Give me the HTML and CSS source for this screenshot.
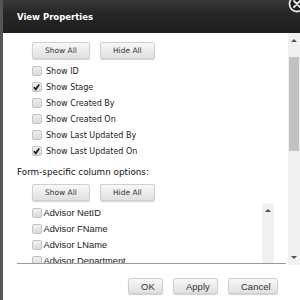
FILE: index.html
```html
<!DOCTYPE html>
<html lang="en">
<head>
    <meta charset="UTF-8">
    <meta name="viewport" content="width=device-width, initial-scale=1.0">
    <title>View Properties</title>
    <link rel="stylesheet" href="styles.css">
</head>
<body>
    <div class="dialog">
        <div class="titlebar">
            <span class="title">View Properties</span>
            <svg class="close" width="20" height="20" viewBox="0 0 20 20">
                <circle cx="10" cy="10" r="7.5" fill="#1c1c1c" stroke="#e8e8e8" stroke-width="1.8"/>
                <path d="M7 7 L13 13 M13 7 L7 13" stroke="#f0f0f0" stroke-width="1.8" stroke-linecap="round"/>
            </svg>
        </div>

        <div class="main">
            <div class="content">
                <div class="btn-row">
                    <button class="btn">Show All</button>
                    <button class="btn">Hide All</button>
                </div>

                <ul class="checks">
                    <li><span class="box"></span>Show ID</li>
                    <li><span class="box checked"><svg viewBox="0 0 10 10"><path d="M2.2 5.2 L4.2 7.6 L8 2.2" fill="none" stroke="#1a1a1a" stroke-width="1.8"/></svg></span>Show Stage</li>
                    <li><span class="box"></span>Show Created By</li>
                    <li><span class="box"></span>Show Created On</li>
                    <li><span class="box"></span>Show Last Updated By</li>
                    <li><span class="box checked"><svg viewBox="0 0 10 10"><path d="M2.2 5.2 L4.2 7.6 L8 2.2" fill="none" stroke="#1a1a1a" stroke-width="1.8"/></svg></span>Show Last Updated On</li>
                </ul>

                <div class="heading">Form-specific column options:</div>

                <div class="btn-row second">
                    <button class="btn">Show All</button>
                    <button class="btn">Hide All</button>
                </div>

                <div class="inner">
                    <ul class="fields">
                        <li><span class="box"></span>Advisor NetID</li>
                        <li><span class="box"></span>Advisor FName</li>
                        <li><span class="box"></span>Advisor LName</li>
                        <li><span class="box"></span>Advisor Department</li>
                    </ul>
                    <div class="inner-bar">
                        <span class="arrow up"></span>
                    </div>
                </div>
            </div>

            <div class="scrollbar">
                <span class="arrow up"></span>
                <div class="track"><div class="thumb"></div></div>
                <span class="arrow down"></span>
            </div>
        </div>

        <div class="footer">
            <button class="btn ok">OK</button>
            <button class="btn apply">Apply</button>
            <button class="btn cancel">Cancel</button>
        </div>
    </div>
</body>
</html>
```

FILE: styles.css
```css
body {
    margin: 0;
    background: #fff;
    font-family: 'DejaVu Sans', sans-serif;
    color: #1a1a1a;
}

.dialog {
    width: 300px;
    height: 300px;
    border-left: 3px solid #555;
    box-sizing: border-box;
    overflow: hidden;
    position: relative;
    background: #fff;
}

.titlebar {
    height: 33px;
    display: flex;
    align-items: center;
    padding-left: 14px;
    background: linear-gradient(#393939, #262626 40%, #1f1f1f);
}

.title {
    color: #fff;
    font-weight: bold;
    font-size: 8.5px;
}

.close {
    position: absolute;
    top: -6px;
    right: -7px;
}

.main {
    height: 232px;
    display: flex;
}

.content {
    flex: 1;
    overflow: hidden;
    padding: 9px 2px 0 14px;
}

.btn-row {
    display: flex;
    gap: 10px;
    padding-left: 15px;
}

.btn-row.second {
    margin-top: 4px;
}

.btn {
    height: 17px;
    padding: 0 12px;
    border: 1px solid #cfcfcf;
    border-radius: 2px;
    background: linear-gradient(#f8f8f8, #e0e0e0);
    box-shadow: 0 1px 1px rgba(0, 0, 0, 0.18);
    font-family: 'DejaVu Sans', sans-serif;
    font-size: 7.5px;
    color: #333;
}

.checks, .fields {
    list-style: none;
    margin: 0;
    padding: 0;
}

.checks {
    margin-top: 4px;
    padding-left: 15px;
}

.checks li, .fields li {
    height: 16px;
    display: flex;
    align-items: center;
    font-size: 8px;
}

.box {
    width: 10px;
    height: 10px;
    box-sizing: border-box;
    border: 1px solid #c2c2c2;
    border-radius: 2px;
    background: linear-gradient(#f1f1f1, #dadada);
    margin-right: 4px;
    display: flex;
}

.box svg {
    width: 10px;
    height: 10px;
    margin: -1px 0 0 -1px;
}

.heading {
    margin-top: 5px;
    height: 16px;
    line-height: 16px;
    font-size: 8.8px;
    color: #111;
}

.inner {
    margin-top: 2px;
    height: 61px;
    box-sizing: border-box;
    border-bottom: 1px solid #9a9a9a;
    display: flex;
    padding-right: 12px;
}

.fields {
    flex: 1;
    padding: 2px 0 0 15px;
    overflow: hidden;
}

.fields li {
    font-family: 'Liberation Sans', Arial, sans-serif;
    font-size: 9.3px;
}

.fields .box {
    margin-right: 1.5px;
}

.inner-bar {
    width: 12px;
    background: #f1f1f1;
    display: flex;
    flex-direction: column;
    align-items: center;
    padding-top: 6px;
    box-sizing: border-box;
}

.scrollbar {
    width: 12px;
    background: #f1f1f1;
    display: flex;
    flex-direction: column;
    align-items: center;
    padding: 6px 0 6px;
    box-sizing: border-box;
}

.arrow {
    width: 0;
    height: 0;
    border-left: 3px solid transparent;
    border-right: 3px solid transparent;
}

.arrow.up {
    border-bottom: 3px solid #505050;
}

.arrow.down {
    border-top: 3px solid #505050;
}

.track {
    flex: 1;
    width: 10px;
    padding: 15px 0 0;
}

.thumb {
    height: 94px;
    background: #c1c1c1;
}

.scrollbar .track {
    margin-bottom: 9px;
}

.footer {
    display: flex;
    justify-content: flex-end;
    gap: 10px;
    padding: 13px 22px 0 0;
}

.footer .btn {
    height: 16px;
    font-family: 'Liberation Sans', Arial, sans-serif;
    font-size: 9.5px;
    color: #333;
}

.ok {
    width: 35px;
}

.apply {
    width: 45px;
}

.cancel {
    width: 50px;
}
```
